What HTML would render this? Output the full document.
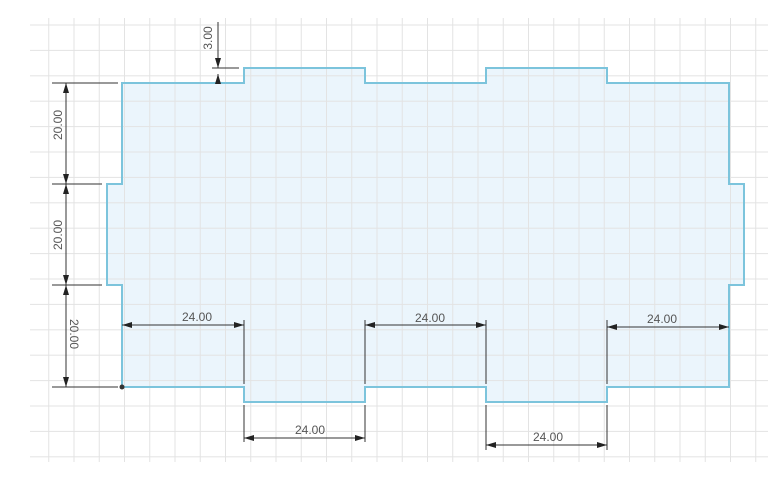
<!DOCTYPE html>
<html><head><meta charset="utf-8"><style>
html,body{margin:0;padding:0;background:#fff;width:779px;height:480px;overflow:hidden}
svg{display:block}
text{font-family:"Liberation Sans",sans-serif;font-size:12px;fill:#555}
</style></head><body>
<svg width="779" height="480" viewBox="0 0 779 480" xmlns="http://www.w3.org/2000/svg">
<defs>
<marker id="a" viewBox="0 0 10 6" refX="10" refY="3" markerWidth="10" markerHeight="6" orient="auto-start-reverse" markerUnits="userSpaceOnUse"><path d="M0,0 L10,3 L0,6 Z" fill="#222"/></marker>
<pattern id="g" patternUnits="userSpaceOnUse" x="23" y="24.5" width="25.25" height="25.4">
<path d="M0.5,0 V25.4 M0,0.5 H25.25" stroke="#e3e3e3" stroke-width="1" fill="none"/>
</pattern>
</defs>
<path d="M122,83 H244 V68 H365 V83 H486 V68 H607 V83 H729 V184 H744 V285 H729 V387 H607 V402 H486 V387 H365 V402 H244 V387 H122 V285 H107 V184 H122 Z" fill="#ebf5fc"/>
<rect x="30" y="18" width="738" height="444" fill="url(#g)"/>
<path d="M122,83 H244 V68 H365 V83 H486 V68 H607 V83 H729 V184 H744 V285 H729 V387 H607 V402 H486 V387 H365 V402 H244 V387 H122 V285 H107 V184 H122 Z" fill="none" stroke="#7cc4dc" stroke-width="2"/>
<g stroke="#333" stroke-width="1" fill="none">
<line x1="52" y1="83" x2="118" y2="83"/>
<line x1="52" y1="184" x2="102" y2="184"/>
<line x1="52" y1="285" x2="102" y2="285"/>
<line x1="52" y1="387" x2="118" y2="387"/>
<line x1="66" y1="83" x2="66" y2="184" marker-start="url(#a)" marker-end="url(#a)"/>
<line x1="66" y1="184" x2="66" y2="285" marker-start="url(#a)" marker-end="url(#a)"/>
<line x1="66" y1="285" x2="66" y2="387" marker-start="url(#a)" marker-end="url(#a)"/>
<line x1="212" y1="68" x2="239" y2="68"/>
<line x1="218" y1="22" x2="218" y2="68" marker-end="url(#a)"/>
<line x1="218" y1="83" x2="218" y2="74" marker-end="url(#a)"/>
<line x1="244" y1="320" x2="244" y2="384"/>
<line x1="365" y1="320" x2="365" y2="384"/>
<line x1="486" y1="320" x2="486" y2="384"/>
<line x1="607" y1="320" x2="607" y2="384"/>
<line x1="122" y1="325" x2="244" y2="325" marker-start="url(#a)" marker-end="url(#a)"/>
<line x1="365" y1="325" x2="486" y2="325" marker-start="url(#a)" marker-end="url(#a)"/>
<line x1="607" y1="327" x2="729" y2="327" marker-start="url(#a)" marker-end="url(#a)"/>
<line x1="244" y1="405" x2="244" y2="442"/>
<line x1="365" y1="405" x2="365" y2="442"/>
<line x1="486" y1="405" x2="486" y2="450"/>
<line x1="607" y1="405" x2="607" y2="450"/>
<line x1="244" y1="438" x2="365" y2="438" marker-start="url(#a)" marker-end="url(#a)"/>
<line x1="486" y1="445" x2="607" y2="445" marker-start="url(#a)" marker-end="url(#a)"/>
</g>
<circle cx="122" cy="387" r="2.5" fill="#333"/>
<text x="0" y="0" text-anchor="middle" transform="translate(62,125) rotate(-90)">20.00</text>
<text x="0" y="0" text-anchor="middle" transform="translate(62,235) rotate(-90)">20.00</text>
<text x="0" y="0" text-anchor="middle" transform="translate(70,334) rotate(90)">20.00</text>
<text x="0" y="0" text-anchor="middle" transform="translate(212,38) rotate(-90)">3.00</text>
<text x="197" y="321" text-anchor="middle">24.00</text>
<text x="430" y="322" text-anchor="middle">24.00</text>
<text x="662" y="323" text-anchor="middle">24.00</text>
<text x="310" y="434" text-anchor="middle">24.00</text>
<text x="548" y="441" text-anchor="middle">24.00</text>
</svg>
</body></html>
